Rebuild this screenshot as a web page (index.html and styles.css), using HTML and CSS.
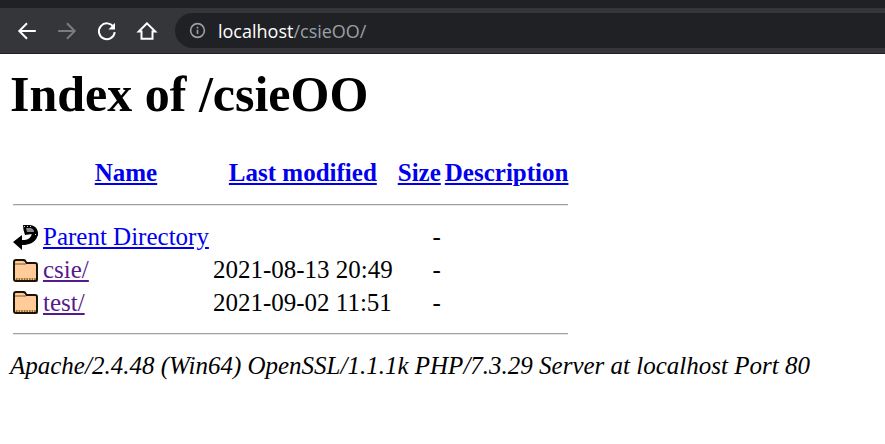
FILE: index.html
```html
<!DOCTYPE html>
<html lang="en">
<head>
    <meta charset="UTF-8">
    <title>Index of /csieOO</title>
    <link rel="stylesheet" href="styles.css">
</head>
<body>

<div class="tabstrip"></div>

<div class="toolbar">
    <div class="nav">
        <svg class="nav-icon" viewBox="0 0 20 20"><path d="M18 10H3.5M10 3l-7 7 7 7"/></svg>
        <svg class="nav-icon off" viewBox="0 0 20 20"><path d="M2 10h14.5M10 3l7 7-7 7"/></svg>
        <svg class="nav-icon" viewBox="0 0 20 20"><path d="M16 6.5A7.2 7.2 0 1 0 17 11"/><path class="solid" d="M17.3 2.6v6h-6z"/></svg>
        <svg class="nav-icon" viewBox="0 0 20 20"><path d="M10 3 2.5 10.5H5V17h10v-6.5h2.5z"/></svg>
    </div>
    <div class="address">
        <svg class="info" viewBox="0 0 16 16"><circle cx="8" cy="8" r="6.5"/><path d="M8 7.2v4.2M8 4.4v1.6"/></svg>
        <span class="host">localhost</span><span class="path">/csieOO/</span>
    </div>
</div>

<div class="page">
    <h1>Index of /csieOO</h1>
    <table>
        <tr>
            <th></th>
            <th><a href="#">Name</a></th>
            <th><a href="#">Last modified</a></th>
            <th><a href="#">Size</a></th>
            <th><a href="#">Description</a></th>
        </tr>
        <tr><th colspan="5"><hr></th></tr>
        <tr>
            <td class="icon">
                <svg viewBox="0 0 25 25">
                    <path fill="#000" d="M25 7Q25 18 12 20H9v5L0 17l9-7v5h3q6-1 7-7z"/>
                    <path fill="#000" d="M10 0h7q7 1 8 7v4q-3-2-6-2l-7 1Q10 5 10 0z"/>
                    <path fill="#8a8a8a" d="M13 3h5q3 1 3 4h-7z"/>
                    <path fill="#dddddd" d="M11 1h1v1h-1zM14 1h1v1h-1zM17 1h1v1h-1zM22 9h1v1h-1z"/>
                </svg>
            </td>
            <td><a href="#">Parent Directory</a></td>
            <td></td>
            <td class="size">-</td>
            <td></td>
        </tr>
        <tr>
            <td class="icon">
                <svg viewBox="0 0 25 25">
                    <use href="#folder"/>
                </svg>
            </td>
            <td><a class="seen" href="#">csie/</a></td>
            <td>2021-08-13 20:49</td>
            <td class="size">-</td>
            <td></td>
        </tr>
        <tr class="short">
            <td class="icon">
                <svg viewBox="0 0 25 25">
                    <use href="#folder"/>
                </svg>
            </td>
            <td><a class="seen" href="#">test/</a></td>
            <td>2021-09-02 11:51</td>
            <td class="size">-</td>
            <td></td>
        </tr>
        <tr><th colspan="5"><hr></th></tr>
    </table>
    <address>Apache/2.4.48 (Win64) OpenSSL/1.1.1k PHP/7.3.29 Server at localhost Port 80</address>
</div>

<svg class="defs">
    <g id="folder">
        <path fill="#1a1408" d="M3 1h8q2 0 3 3h8q3 0 3 3v15q0 2-2 2H3q-3 0-3-3V4q0-3 3-3z"/>
        <path fill="#ffcc99" d="M3 3h7q2 0 3 3h9q1 0 1 1v14q0 1-1 1H3q-1 0-1-1V4q0-1 1-1z"/>
        <path fill="none" stroke="#7a5a30" stroke-width="1" d="M2 6h11"/>
        <path fill="none" stroke="#7a4a10" stroke-width="1.6" stroke-dasharray="1.6 1" d="M3 21h20"/>
    </g>
</svg>

</body>
</html>
```

FILE: styles.css
```css
body {
    margin: 0;
    background-color: #ffffff;
    color: #000000;
    font-family: "Liberation Serif", serif;
    font-size: 25px;
}
.tabstrip {
    height: 8px;
    background-color: #202124;
}
.toolbar {
    display: flex;
    align-items: center;
    height: 45px;
    padding-left: 16px;
    background-color: #35363a;
    border-bottom: 1px solid #202124;
}
.nav {
    display: flex;
    gap: 18px;
    width: 159px;
}
.nav-icon {
    width: 22px;
    height: 22px;
    fill: none;
    stroke: #ffffff;
    stroke-width: 1.8;
}
.nav-icon.off {
    stroke: #7b7c7f;
}
.nav-icon .solid {
    fill: #ffffff;
    stroke: none;
}
.address {
    flex: 1;
    display: flex;
    align-items: center;
    height: 35px;
    padding-left: 14px;
    background-color: #202124;
    border-radius: 18px 0 0 18px;
    font-family: "Open Sans", sans-serif;
    font-size: 18px;
}
.info {
    width: 17px;
    height: 17px;
    margin-right: 12px;
    fill: none;
    stroke: #9aa0a6;
    stroke-width: 1.5;
}
.host {
    color: #ffffff;
}
.path {
    color: #9aa0a6;
}
.page {
    padding: 0 10px;
}
h1 {
    margin: 11px 0 32px;
    font-size: 50px;
    line-height: 58px;
}
table {
    margin-left: -1px;
    border-spacing: 3px;
}
th, td {
    padding: 1px;
    line-height: 28px;
}
.short td {
    line-height: 27px;
}
th:nth-child(2), td:nth-child(2) {
    padding-right: 0;
}
th:nth-child(5) {
    padding-left: 0;
}
a {
    color: #0000ee;
}
a.seen {
    color: #551a8b;
}
td.icon {
    padding: 0 1px;
    line-height: 0;
}
.icon svg {
    width: 25px;
    height: 25px;
}
.size {
    text-align: right;
    padding-right: 1px;
}
hr {
    margin: 12px 0;
    border: 0;
    border-top: 1px solid #a0a0a0;
    border-bottom: 1px solid #e8e8e8;
}
address {
    line-height: 29px;
}
.defs {
    display: none;
}
```
